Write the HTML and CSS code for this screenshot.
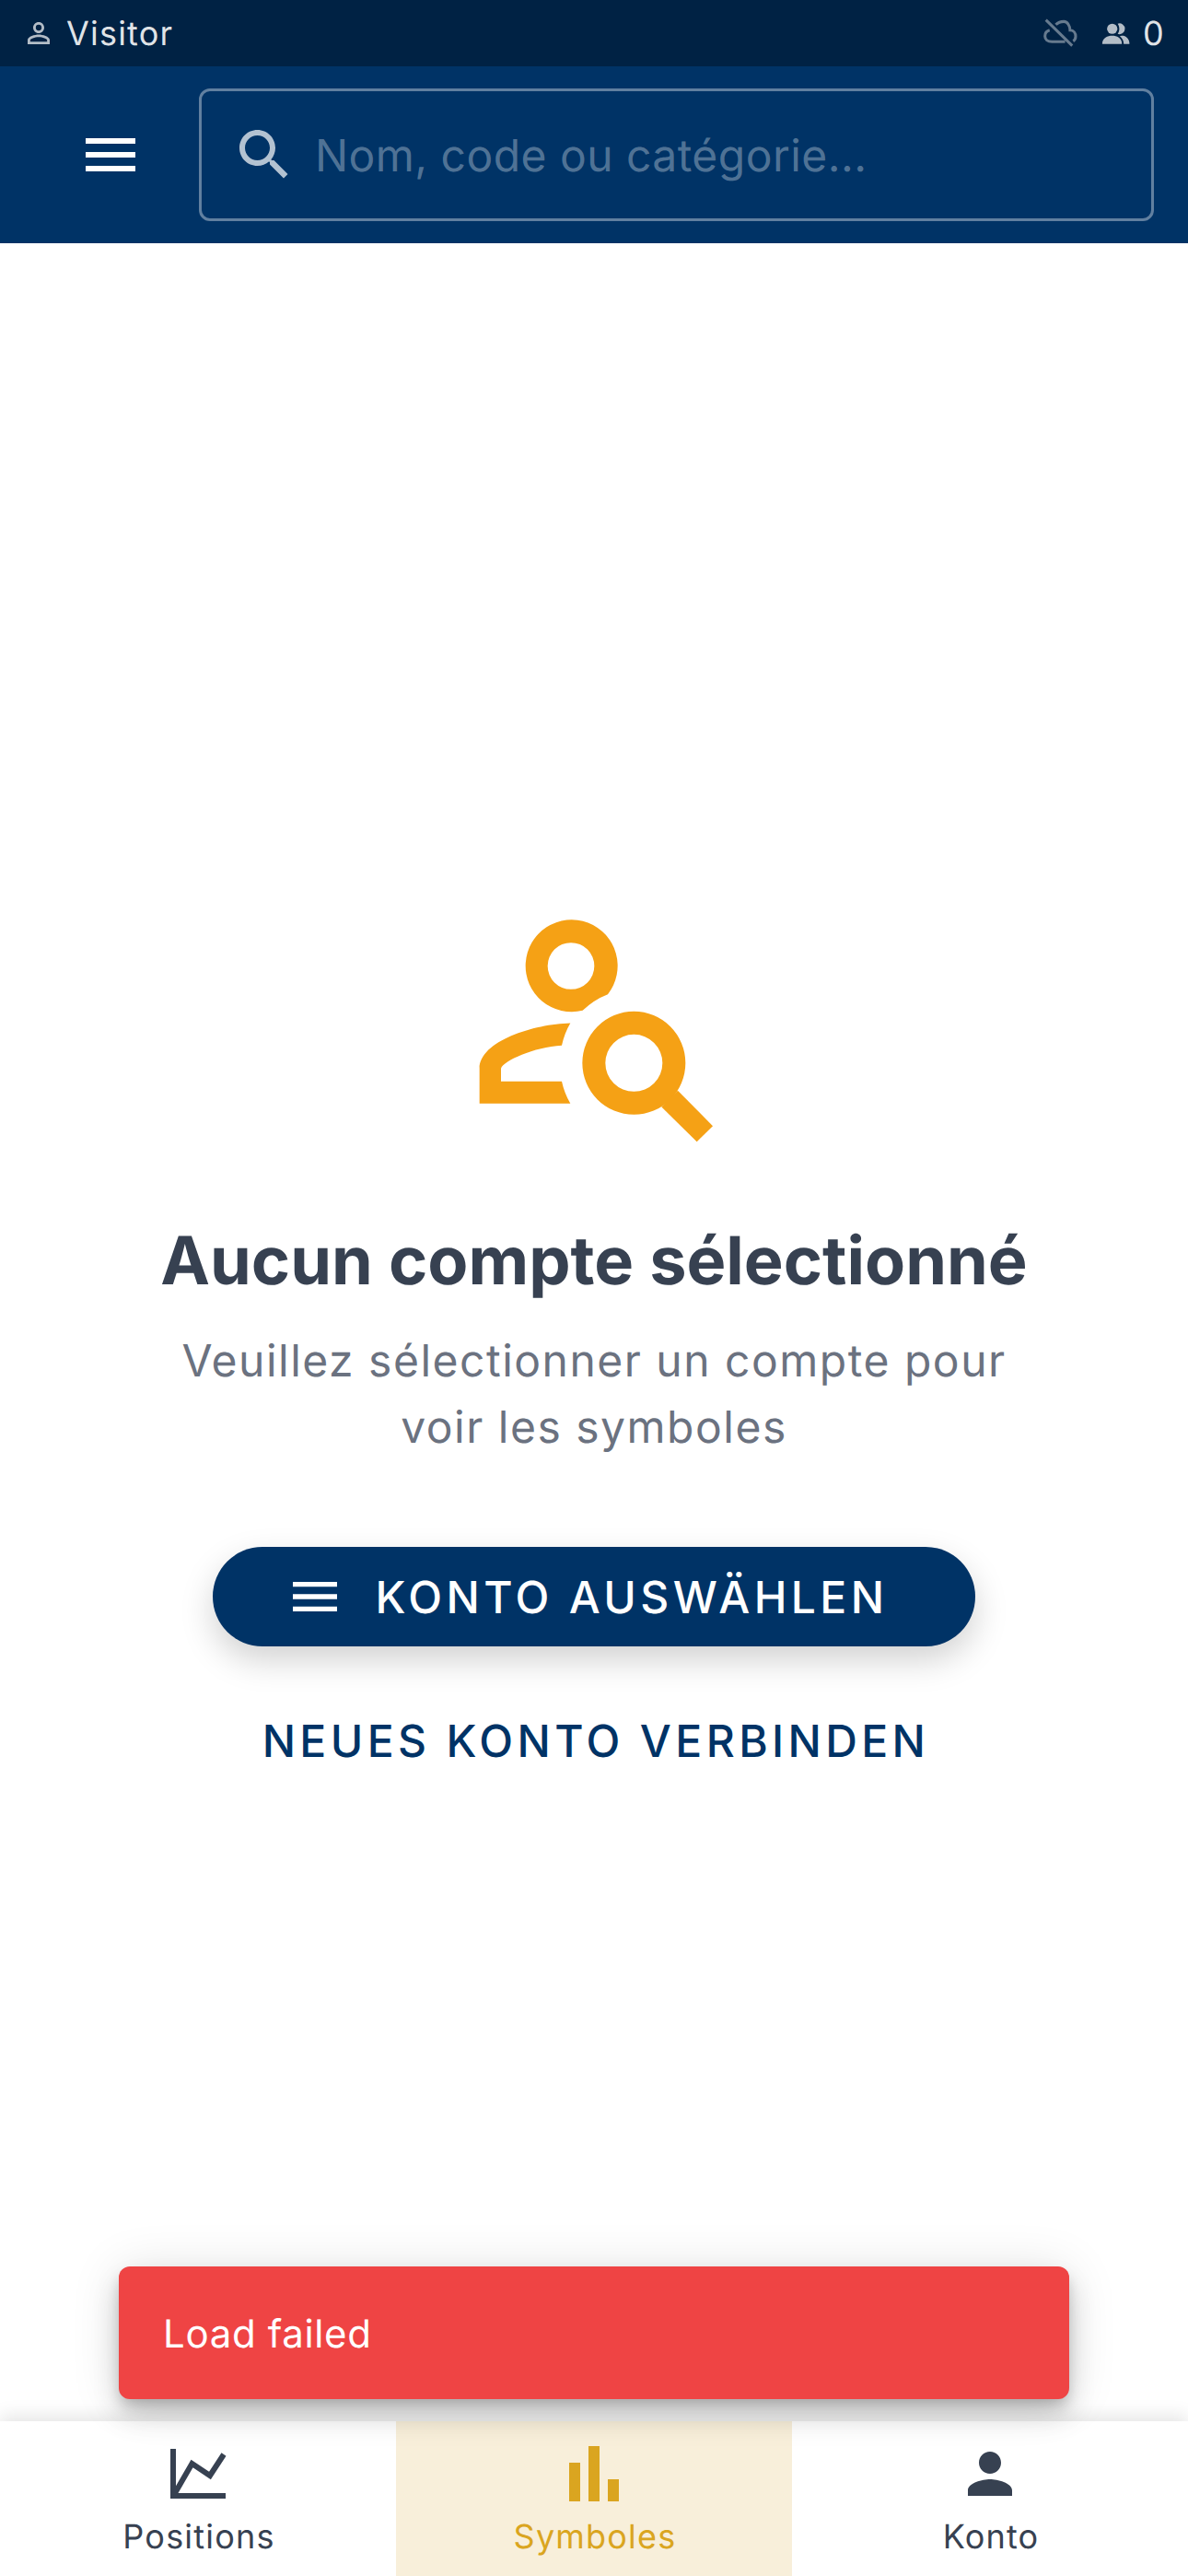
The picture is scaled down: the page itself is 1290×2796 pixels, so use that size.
FILE: index.html
```html
<!DOCTYPE html>
<html lang="fr">
<head>
<meta charset="utf-8">
<title>Symboles</title>
<link rel="stylesheet" href="styles.css">
</head>
<body>
<div class="app">
  <div class="status">
    <div class="status-left">
      <svg class="ic-status" viewBox="0 0 24 24"><path d="M12 5.9a2.1 2.1 0 1 1 0 4.2 2.1 2.1 0 0 1 0-4.2m0 9c2.97 0 6.1 1.46 6.1 2.1v1.1H5.9V17c0-.64 3.13-2.1 6.1-2.1M12 4C9.79 4 8 5.79 8 8s1.79 4 4 4 4-1.79 4-4-1.79-4-4-4zm0 9c-2.67 0-8 1.34-8 4v3h16v-3c0-2.66-5.33-4-8-4z"/></svg>
      <span class="status-text">Visitor</span>
    </div>
    <div class="status-right">
      <svg class="ic-cloud" viewBox="42 30 110 95"><path d="M50 35L135 118M82 50C90 42 100 40 108 40C120 40 128 55 128 68C140 68 146 78 146 88C146 94 143 100 138 103M112 105H70C55 105 47 97 47 87C47 76 55 70 62 68"/></svg>
      <svg class="ic-people" viewBox="230 36 93 70"><circle cx="265" cy="55" r="17"/><path d="M232 105C232 85 250 78 265 78C280 78 297 85 297 105Z"/><path d="M283 38A18 18 0 1 1 283 72C290 62 290 48 283 38Z"/><path d="M302 78C315 82 322 92 322 105H303C303 95 298 85 290 79C294 78 298 78 302 78Z"/></svg>
      <span class="status-text">0</span>
    </div>
  </div>

  <header class="header">
    <svg class="ic-menu" viewBox="0 0 24 24"><path d="M3 18h18v-2H3v2zm0-5h18v-2H3v2zm0-7v2h18V6H3z"/></svg>
    <div class="search">
      <svg class="ic-search" viewBox="0 0 24 24"><path d="M15.5 14h-.79l-.28-.27C15.41 12.59 16 11.11 16 9.5 16 5.91 13.09 3 9.5 3S3 5.91 3 9.5 5.91 16 9.5 16c1.61 0 3.09-.59 4.23-1.57l.27.28v.79l5 4.99L20.49 19l-4.99-5zm-6 0C7.01 14 5 11.99 5 9.5S7.01 5 9.5 5 14 7.01 14 9.5 11.99 14 9.5 14z"/></svg>
      <span class="placeholder">Nom, code ou catégorie...</span>
    </div>
  </header>

  <main class="main">
    <svg class="ic-empty" viewBox="120 115 765 725">
      <path fill-rule="evenodd" d="M540 358A150 150 0 1 0 458 411A242 242 0 0 1 540 358ZM420 190a76 76 0 1 1 0 152a76 76 0 1 1 0-152Z"/>
      <path d="M418 452C300 455 122 510 122 600V714H418A245 245 0 0 1 390 642H192V600C200 575 300 530 390 525A242 242 0 0 1 418 452Z"/>
      <path fill-rule="evenodd" d="M625 414a168 168 0 1 1 0 336a168 168 0 1 1 0-336ZM625 489a93 93 0 1 0 0 186a93 93 0 1 0 0-186Z"/>
      <path d="M768 672L882 787L830 838L715 725Z"/>
    </svg>
    <h1 class="title">Aucun compte sélectionné</h1>
    <p class="subtitle">Veuillez sélectionner un compte pour voir les symboles</p>
    <button class="btn-primary">
      <svg class="ic-btn" viewBox="0 0 24 24"><path d="M3 18h18v-2H3v2zm0-5h18v-2H3v2zm0-7v2h18V6H3z"/></svg>
      <span>KONTO AUSWÄHLEN</span>
    </button>
    <button class="btn-text">NEUES KONTO VERBINDEN</button>
  </main>

  <div class="toast">Load failed</div>

  <nav class="nav">
    <div class="nav-item">
      <svg class="nav-ic" viewBox="0 0 72 72"><path fill="none" stroke="currentColor" stroke-width="6" d="M9 9V60H66"/><path fill="none" stroke="currentColor" stroke-width="6" d="M11 57L29.5 25L49 38L64 15"/></svg>
      <span class="nav-label">Positions</span>
    </div>
    <div class="nav-item active">
      <svg class="nav-ic" viewBox="0 0 72 72"><path fill="currentColor" d="M9 24H21V66H9ZM30 6H42V66H30ZM51 42H63V66H51Z"/></svg>
      <span class="nav-label">Symboles</span>
    </div>
    <div class="nav-item">
      <svg class="nav-ic" viewBox="0 0 24 24"><path fill="currentColor" d="M12 12c2.21 0 4-1.79 4-4s-1.79-4-4-4-4 1.79-4 4 1.79 4 4 4zm0 2c-2.67 0-8 1.34-8 4v2h16v-2c0-2.66-5.33-4-8-4z"/></svg>
      <span class="nav-label">Konto</span>
    </div>
  </nav>
</div>
</body>
</html>
```
FILE: styles.css
```css
* { box-sizing: border-box; }
html, body { margin: 0; padding: 0; background: #fff; }
body { font-family: Inter, "Liberation Sans", sans-serif; text-rendering: geometricPrecision; }
.app { position: relative; width: 1290px; height: 2796px; display: flex; flex-direction: column; overflow: hidden; }

.status { height: 72px; flex: none; background: #002244; display: flex; align-items: center; justify-content: space-between; padding: 0 25px 0 24px; }
.status-left, .status-right { display: flex; align-items: center; }
.status-text { font-size: 36px; line-height: 48px; color: rgba(255,255,255,.9); letter-spacing: 1.2px; }
.status-left .status-text { margin-left: 12px; }
.ic-status { width: 36px; height: 36px; fill: rgba(255,255,255,.7); }
.ic-cloud { width: 37px; height: 32px; fill: none; stroke: rgba(255,255,255,.4); stroke-width: 9; }
.ic-people { width: 31px; height: 23px; margin-left: 26px; margin-right: 14px; fill: rgba(255,255,255,.7); }

.header { height: 192px; flex: none; background: #003366; display: flex; align-items: center; padding: 0 37px 0 84px; }
.ic-menu { width: 72px; height: 72px; fill: #fff; flex: none; }
.search { margin-left: 60px; flex: 1; height: 144px; border: 3px solid rgba(255,255,255,.38); border-radius: 12px; display: flex; align-items: center; padding-left: 32px; }
.ic-search { width: 72px; height: 72px; fill: rgba(255,255,255,.7); flex: none; }
.placeholder { margin-left: 19px; font-size: 48px; color: rgba(255,255,255,.32); letter-spacing: .45px; }

.main { flex: 1; display: flex; flex-direction: column; align-items: center; padding-top: 734px; }
.ic-empty { width: 255px; height: 242px; fill: #f5a115; flex: none; margin-left: 5px; }
.title { margin: 81px 0 0; font-size: 72px; line-height: 96px; font-weight: 700; color: #374151; }
.subtitle { margin: 24px 0 0; width: 930px; text-align: center; font-size: 48px; line-height: 72px; color: #6b7280; letter-spacing: 1.5px; }
.btn-primary { margin-top: 94px; width: 828px; height: 108px; border: 0; border-radius: 54px; background: #003366; color: #fff; display: flex; align-items: center; justify-content: center; padding: 0 16px 0 0; font: 450 48px Inter, sans-serif; letter-spacing: 4.4px; text-rendering: geometricPrecision; box-shadow: 0 15px 36px rgba(0,0,0,.18); }
.ic-btn { width: 64px; height: 64px; fill: #fff; margin-right: 34px; flex: none; }
.btn-text { margin: 66px 0 0 4px; height: 72px; border: 0; background: none; color: #003366; font: 450 48px Inter, sans-serif; letter-spacing: 4.4px; text-rendering: geometricPrecision; padding: 0; }

.toast { position: absolute; left: 129px; top: 2460px; width: 1032px; height: 144px; background: #ef4444; border-radius: 12px; color: #fff; font-size: 42px; letter-spacing: .65px; line-height: 148px; padding-left: 48px; z-index: 2; box-shadow: 0 9px 15px -3px rgba(0,0,0,.2), 0 18px 30px 0 rgba(0,0,0,.14), 0 3px 54px 0 rgba(0,0,0,.12); }

.nav { position: relative; z-index: 1; height: 168px; flex: none; display: grid; grid-template-columns: 430px 430px 430px; background: #fff; box-shadow: 0 -6px 18px rgba(0,0,0,.1); }
.nav-item { display: flex; flex-direction: column; align-items: center; padding-top: 21px; color: #374151; }
.nav-item.active { background: #f8efda; color: #daa520; }
.nav-ic { width: 72px; height: 72px; flex: none; }
.nav-label { margin: 8px 0 0 2px; font-size: 36px; line-height: 48px; letter-spacing: 1.2px; }
```
